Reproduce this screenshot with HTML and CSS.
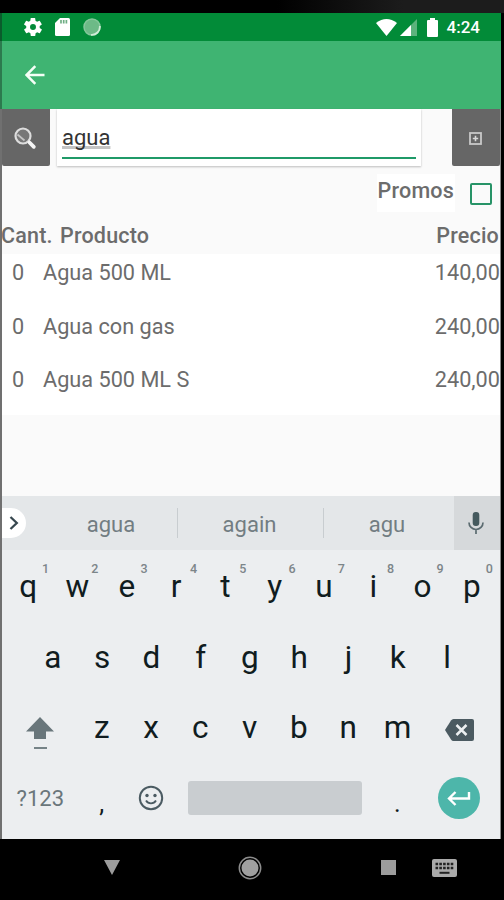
FILE: index.html
```
<!DOCTYPE html>
<html lang="es">
<head>
    <meta charset="UTF-8">
    <meta name="viewport" content="width=device-width, initial-scale=1.0">
    <title>Productos</title>
    <link rel="stylesheet" href="styles.css">
</head>
<body>
    <div class="bezel"></div>
    <div class="screen">
        <div class="status-bar">
            <svg class="icon-gear" width="18" height="18" viewBox="2 2 20 20"><path fill="#fff" d="M19.4 13a7.500 7.500 0 0 0 0-2l2.100-1.600a.5.5 0 0 0 .1-.7l-2-3.400a.5.5 0 0 0-.6-.2l-2.500 1a7.300 7.300 0 0 0-1.700-1l-.4-2.700a.5.5 0 0 0-.5-.4h-4a.5.5 0 0 0-.5.4L9 5.100a7.700 7.700 0 0 0-1.700 1l-2.500-1a.5.5 0 0 0-.6.200l-2 3.400a.5.5 0 0 0 .1.700L4.500 11a8 8 0 0 0 0 2l-2.100 1.600a.5.5 0 0 0-.1.700l2 3.400c.1.200.4.300.6.200l2.500-1c.5.400 1.100.7 1.700 1l.4 2.700c0 .2.200.4.500.4h4c.3 0 .5-.2.500-.4l.4-2.700a7.300 7.300 0 0 0 1.700-1l2.500 1c.2.100.5 0 .6-.2l2-3.400a.5.5 0 0 0-.1-.7zM12 15.300a3.300 3.300 0 1 1 0-6.600 3.300 3.300 0 0 1 0 6.600z"/></svg>
            <svg class="icon-sd" width="15" height="18" viewBox="0 0 15 18"><path fill="#fff" d="M5 0h8.500A1.500 1.500 0 0 1 15 1.500v15a1.500 1.500 0 0 1-1.500 1.500h-12A1.500 1.500 0 0 1 0 16.500V5z"/><path stroke="#6fae84" stroke-width="1.700" d="M6 2v3.500M8.700 2v3.500M11.400 2v3.500"/></svg>
            <svg class="icon-sync" width="18" height="18" viewBox="0 0 18 18"><circle cx="9" cy="9" r="8" fill="#6dba87" stroke="#86c79b" stroke-width="1.500"/><path fill="none" stroke="#d0ecd7" stroke-width="1.800" d="M16.800 8A8 8 0 0 1 8 16.800"/></svg>
            <div class="status-right">
                <svg class="icon-wifi" width="21" height="17" viewBox="0 0 21 17"><path fill="#fff" d="M0 4Q10.500-4 21 4L10.500 17z"/></svg>
                <svg class="icon-signal" width="17" height="17" viewBox="0 0 17 17"><path fill="#5cb37c" d="M17 0v17H0z"/><path fill="#fff" d="M11 6v11H0z"/></svg>
                <svg class="icon-battery" width="11" height="19" viewBox="0 0 11 19"><path fill="#fff" d="M3 0h5v2h2a1 1 0 0 1 1 1v15a1 1 0 0 1-1 1H1a1 1 0 0 1-1-1V3a1 1 0 0 1 1-1h2z"/></svg>
                <span class="clock">4:24</span>
            </div>
        </div>

        <div class="app-bar">
            <svg width="20" height="20" viewBox="0 0 20 20"><path fill="none" stroke="#f4fff6" stroke-width="2.500" d="M19.500 10H2M10.300 1.200L1.500 10l8.800 8.800"/></svg>
        </div>

        <div class="search-row">
            <button class="tool-btn search-btn">
                <svg width="24" height="24" viewBox="0 0 24 24"><circle cx="10" cy="10" r="7.500" fill="#777" stroke="#ddd" stroke-width="2.200"/><path stroke="#c4c4c4" stroke-width="1.700" d="M4.500 8.500l7 6"/><path stroke="#f4f4f4" stroke-width="3.800" stroke-linecap="round" d="M16.500 16.500l4.300 4.300"/></svg>
            </button>
            <div class="search-box">
                <div class="search-input"><span>agua</span></div>
            </div>
            <button class="tool-btn add-btn">
                <svg width="13" height="13" viewBox="0 0 13 13"><rect x="1" y="1" width="11" height="11" fill="none" stroke="#c8c8c8" stroke-width="1.800"/><path stroke="#d8d8d8" stroke-width="1.600" d="M6.500 3.800v5.400M3.800 6.500h5.400"/></svg>
            </button>
        </div>

        <div class="promos">
            <label>Promos</label>
            <span class="checkbox"></span>
        </div>

        <div class="list-header">
            <span class="col-qty">Cant.</span>
            <span class="col-name">Producto</span>
            <span class="col-price">Precio</span>
        </div>
        <div class="list">
            <div class="item"><span class="qty">0</span><span class="name">Agua 500 ML</span><span class="price">140,00</span></div>
            <div class="item"><span class="qty">0</span><span class="name">Agua con gas</span><span class="price">240,00</span></div>
            <div class="item"><span class="qty">0</span><span class="name">Agua 500 ML S</span><span class="price">240,00</span></div>
        </div>

        <div class="suggestions">
            <div class="expand">
                <svg width="10" height="14" viewBox="0 0 10 14"><path fill="none" stroke="#37474f" stroke-width="2.300" d="M1.500 1l6.300 6-6.300 6"/></svg>
            </div>
            <span class="word first">agua</span>
            <span class="word">again</span>
            <span class="word last">agu</span>
            <div class="mic">
                <svg width="16" height="22" viewBox="0 0 16 22"><rect x="4.700" y="0" width="6.600" height="14" rx="3" fill="#455a5e"/><path fill="none" stroke="#5b6b70" stroke-width="1.700" d="M1 10.500a7 7 0 0 0 14 0M8 17.500V22"/></svg>
            </div>
        </div>

        <div class="keyboard">
            <div class="key-row">
                <span class="key">q<i>1</i></span><span class="key">w<i>2</i></span><span class="key">e<i>3</i></span><span class="key">r<i>4</i></span><span class="key">t<i>5</i></span><span class="key">y<i>6</i></span><span class="key">u<i>7</i></span><span class="key">i<i>8</i></span><span class="key">o<i>9</i></span><span class="key">p<i>0</i></span>
            </div>
            <div class="key-row middle">
                <span class="key">a</span><span class="key">s</span><span class="key">d</span><span class="key">f</span><span class="key">g</span><span class="key">h</span><span class="key">j</span><span class="key">k</span><span class="key">l</span>
            </div>
            <div class="key-row">
                <span class="key wide">
                    <svg class="icon-shift" width="28" height="32" viewBox="0 0 28 32"><path fill="#69767b" d="M14 0l14 14.500h-8V22H8v-7.500H0z"/><path stroke="#69767b" stroke-width="1.800" d="M8 31h13"/></svg>
                </span>
                <span class="key">z</span><span class="key">x</span><span class="key">c</span><span class="key">v</span><span class="key">b</span><span class="key">n</span><span class="key">m</span>
                <span class="key wide">
                    <svg class="icon-delete" width="29" height="22" viewBox="0 0 29 22"><path fill="#4b5a61" d="M8.500 0H27a2 2 0 0 1 2 2v18a2 2 0 0 1-2 2H8.500Q7 22 6 20.500L0 11l6-9.500Q7 0 8.500 0z"/><path stroke="#eceff1" stroke-width="2.500" d="M11.500 6l10 10M21.500 6l-10 10"/></svg>
                </span>
            </div>
            <div class="key-row">
                <span class="key wide symbols">?123</span>
                <span class="key punct">,</span>
                <span class="key">
                    <svg width="26" height="26" viewBox="0 0 26 26"><circle cx="13" cy="13" r="11.200" fill="none" stroke="#4b5b62" stroke-width="2"/><circle cx="9" cy="10.500" r="1.700" fill="#4b5b62"/><circle cx="17" cy="10.500" r="1.700" fill="#4b5b62"/><path fill="none" stroke="#4b5b62" stroke-width="1.800" d="M8 15.500a5.800 5.800 0 0 0 10 0"/></svg>
                </span>
                <span class="space"></span>
                <span class="key punct">.</span>
                <span class="key wide">
                    <span class="enter">
                        <svg width="24" height="16" viewBox="0 0 24 16"><path fill="none" stroke="#fff" stroke-width="2.400" d="M22 2v6.500H2M8.500 2L2 8.500 8.500 15"/></svg>
                    </span>
                </span>
            </div>
        </div>
    </div>

    <div class="nav-bar">
        <svg class="nav-back" width="16" height="15" viewBox="0 0 16 15"><path fill="#9c9c9c" d="M0 0h16L8 15z"/></svg>
        <svg class="nav-home" width="24" height="24" viewBox="0 0 24 24"><circle cx="12" cy="12" r="10.700" fill="none" stroke="#8d8d8d" stroke-width="1.500"/><circle cx="12" cy="12" r="8.500" fill="#a0a0a0"/></svg>
        <svg class="nav-recent" width="15" height="15" viewBox="0 0 15 15"><path fill="#9c9c9c" d="M0 0h15v15H0z"/></svg>
        <svg class="nav-keyboard" width="25" height="18" viewBox="0 0 25 18"><rect width="25" height="18" rx="2" fill="#aaa"/><path stroke="#222" stroke-width="2.400" stroke-dasharray="2.600 1.200" d="M3.500 5h18M3.500 9h18"/><path stroke="#222" stroke-width="2" d="M7.500 13.800h10"/></svg>
    </div>
</body>
</html>
```
FILE: styles.css
```
* {
    box-sizing: border-box;
}
body {
    margin: 0;
    width: 504px;
    height: 900px;
    overflow: hidden;
    background: #000;
    font-family: Roboto, sans-serif;
    color: #6c6c6c;
}
svg {
    display: block;
    flex-shrink: 0;
}
.bezel {
    height: 13px;
    background: linear-gradient(to right, #000 55%, #1c1c1c 80%);
}

.screen {
    width: 501px;
    height: 826px;
    border-left: 2px solid #707070;
    border-right: 1px solid #8a8a8a;
    background: #fafafa;
    display: flex;
    flex-direction: column;
}

.status-bar {
    height: 28px;
    background: #028b38;
    display: flex;
    align-items: center;
    padding: 0 21px 0 22px;
    margin: 0 -1px 0 -2px;
    border-left: 2px solid #0a5c2c;
}
.icon-sd {
    margin-left: 13px;
}
.icon-sync {
    margin-left: 13px;
}
.status-right {
    display: flex;
    align-items: center;
    margin-left: auto;
}
.icon-signal {
    margin-left: 3px;
}
.icon-battery {
    margin-left: 10px;
}
.clock {
    margin-left: 9px;
    font-size: 17px;
    font-weight: 500;
    color: #fff;
}

.app-bar {
    height: 68px;
    background: #3fb472;
    display: flex;
    align-items: center;
    padding-left: 23px;
    margin: 0 -1px 0 -2px;
    border-left: 2px solid #2c7a4e;
}

.search-row {
    height: 59px;
    display: flex;
    align-items: flex-start;
}
.tool-btn {
    width: 48px;
    height: 57px;
    padding: 0;
    border: none;
    border-radius: 0 0 2px 2px;
    background: #666;
    display: flex;
    align-items: center;
    justify-content: center;
}
.search-btn {
    padding-right: 2px;
}
.add-btn {
    padding: 2px 1px 0 0;
}
.search-box {
    width: 364px;
    height: 57px;
    margin: 0 31px 0 7px;
    padding: 0 5px;
    background: #fff;
    box-shadow: 0 1px 2px rgba(0, 0, 0, 0.25);
}
.search-input {
    height: 50px;
    border-bottom: 2px solid #1f9a68;
    font-size: 22px;
    line-height: 57px;
    color: #333;
}
.search-input span {
    text-decoration: underline 3px #c4c4c4;
    text-underline-offset: 1px;
    text-decoration-skip-ink: none;
}

.promos {
    height: 52px;
    display: flex;
    justify-content: flex-end;
    padding: 6px 8px 0 0;
    font-size: 21.5px;
    font-weight: 500;
    letter-spacing: 0.2px;
}
.promos label {
    height: 38px;
    padding: 0 1px;
    line-height: 33px;
    background: #fff;
}
.checkbox {
    width: 22px;
    height: 22px;
    margin: 9px 0 0 15px;
    border: 2px solid #279367;
    border-radius: 2px;
}

.list-header {
    height: 34px;
    display: flex;
    padding-right: 1px;
    font-size: 21.5px;
    font-weight: 500;
    letter-spacing: 0.2px;
    line-height: 32px;
}
.col-qty {
    width: 58px;
    margin-left: -1px;
}
.col-name {
    margin-left: 1px;
}
.col-price {
    margin-left: auto;
}
.list {
    background: #fff;
}
.item {
    height: 53.6px;
    display: flex;
    font-size: 21.7px;
    line-height: 37px;
}
.qty {
    width: 41px;
    padding-left: 10px;
}
.price {
    margin-left: auto;
}

.suggestions {
    height: 54px;
    margin-top: auto;
    background: #e4e7e9;
    display: flex;
    align-items: center;
    font-size: 22px;
    color: #727d82;
}
.expand {
    width: 24px;
    height: 30px;
    padding-left: 7px;
    border-radius: 0 15px 15px 0;
    background: #fff;
    display: flex;
    align-items: center;
}
.word {
    width: 146px;
    height: 30px;
    padding-right: 2px;
    line-height: 34px;
    text-align: center;
    border-right: 1px solid #c8cdd0;
}
.word.first {
    width: 152px;
    padding-left: 21px;
}
.word.last {
    width: 130px;
    padding-right: 4px;
    border-right: none;
}
.mic {
    flex: 1;
    height: 54px;
    padding: 0 2px 0 0;
    background: #d6d9db;
    display: flex;
    align-items: center;
    justify-content: center;
}

.keyboard {
    height: 289px;
    padding: 1px 3px 0 1.5px;
    background: #eceef0;
}
.key-row {
    height: 70.7px;
    display: flex;
}
.key-row.middle {
    padding: 0 24.6px;
}
.key {
    position: relative;
    width: 49.3px;
    flex-shrink: 0;
    display: flex;
    align-items: center;
    justify-content: center;
    font-size: 31.5px;
    color: #101c20;
}
.key i {
    position: absolute;
    top: 10px;
    left: 38.5px;
    font-size: 12.5px;
    font-style: normal;
    font-weight: 500;
    color: #7c8589;
}
.key.wide {
    width: 73.6px;
}
.key.symbols {
    font-size: 22px;
    color: #6a767b;
}
.icon-shift {
    margin-top: 11px;
}
.icon-delete {
    margin: 4px 0 0 2px;
}
.space {
    width: 174px;
    height: 34px;
    margin: 18px 11px 0 12px;
    border-radius: 3px;
    background: #c9cdd0;
}
.key.punct {
    padding-top: 10px;
    font-size: 25px;
}
.enter {
    width: 42px;
    height: 42px;
    margin-left: 1px;
    border-radius: 50%;
    background: #4db6aa;
    display: flex;
    align-items: center;
    justify-content: center;
}

.nav-bar {
    height: 57px;
    display: flex;
    align-items: center;
    padding-left: 104px;
}
.nav-home {
    margin-left: 118px;
}
.nav-recent {
    margin-left: 119px;
}
.nav-keyboard {
    margin-left: 36px;
}
```
